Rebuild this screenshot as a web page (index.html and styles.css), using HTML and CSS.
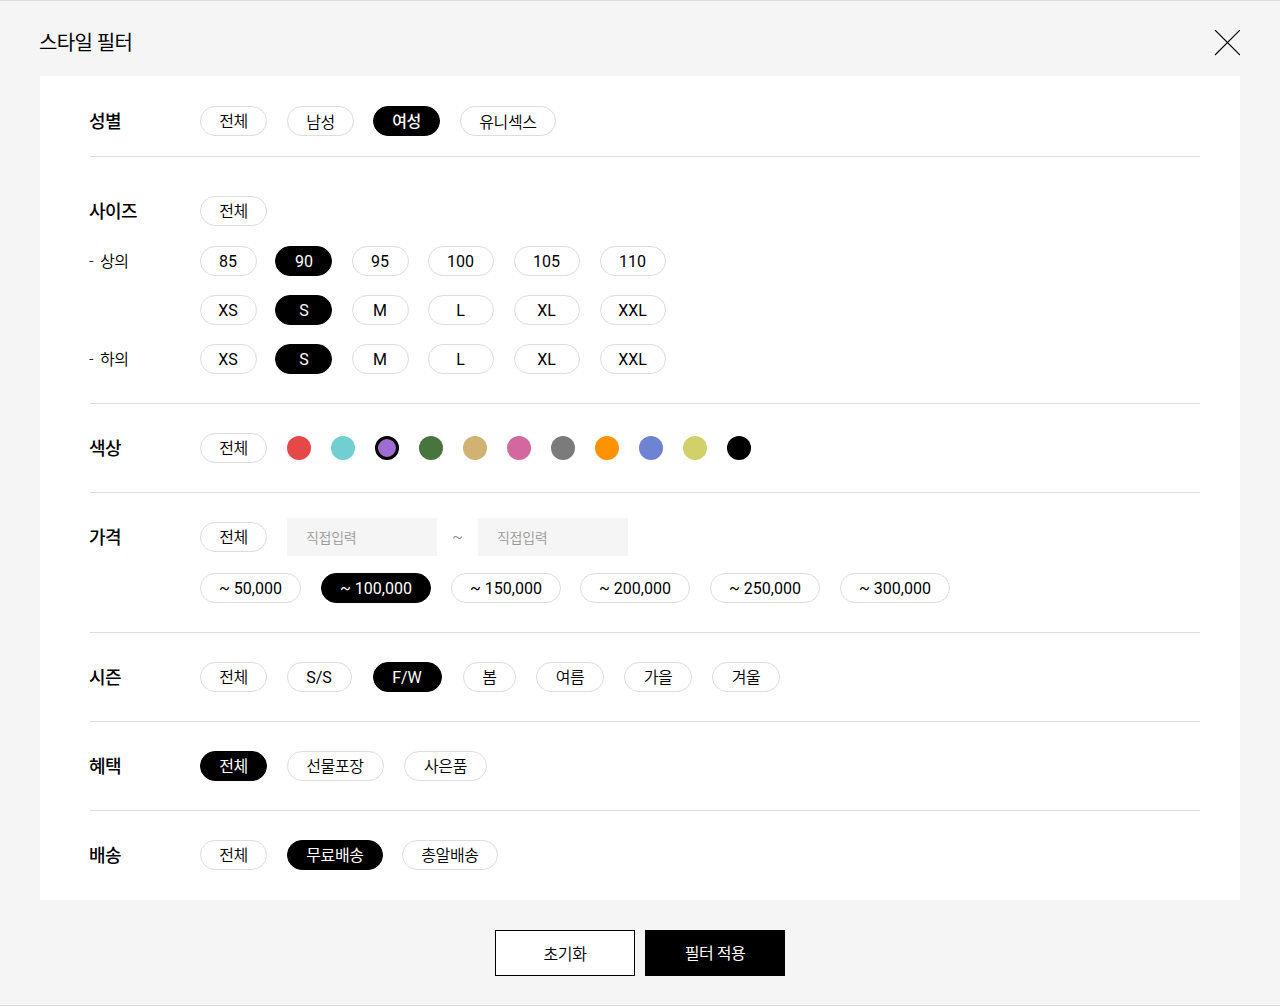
FILE: index.html
```html
<!DOCTYPE html>
<html lang="ko">
<head>
<meta charset="utf-8">
<title>스타일 필터</title>
<link rel="stylesheet" href="styles.css">
</head>
<body>
<section class="filter">
  <header class="filter-head">
    <h1>스타일 필터</h1>
    <button class="close" aria-label="닫기"><svg width="26" height="26" viewBox="0 0 26 26"><path d="M1 0l25 25M26 0l-25 25" fill="none" stroke="#000" stroke-width="1.1"/></svg></button>
  </header>
  <div class="panel">
    <div class="group gender">
      <h2>성별</h2>
      <div class="row"><button class="pill w67">전체</button><button class="pill w67 low">남성</button><button class="pill w67 on strong pull">여성</button><button class="pill w96 low">유니섹스</button></div>
    </div>
    <div class="group size">
      <h2>사이즈</h2>
      <div class="row"><button class="pill w67">전체</button></div>
      <h3>- 상의</h3>
      <div class="row latin"><button class="pill w57">85</button><button class="pill w57 on pull2">90</button><button class="pill w57">95</button><button class="pill w66 pull">100</button><button class="pill w66">105</button><button class="pill w66">110</button></div>
      <span></span>
      <div class="row latin"><button class="pill w57">XS</button><button class="pill w57 on pull2">S</button><button class="pill w57">M</button><button class="pill w66 pull">L</button><button class="pill w66">XL</button><button class="pill w66">XXL</button></div>
      <h3>- 하의</h3>
      <div class="row latin"><button class="pill w57">XS</button><button class="pill w57 on pull2">S</button><button class="pill w57">M</button><button class="pill w66 pull">L</button><button class="pill w66">XL</button><button class="pill w66">XXL</button></div>
    </div>
    <div class="group">
      <h2>색상</h2>
      <div class="row"><button class="pill w67">전체</button><button class="dot red"></button><button class="dot aqua"></button><button class="dot purple picked"></button><button class="dot green"></button><button class="dot beige"></button><button class="dot pink"></button><button class="dot gray"></button><button class="dot orange"></button><button class="dot blue"></button><button class="dot lime"></button><button class="dot black"></button></div>
    </div>
    <div class="group price">
      <h2>가격</h2>
      <div class="row range"><button class="pill w67">전체</button><input type="text" placeholder="직접입력"><span class="tilde">~</span><input type="text" placeholder="직접입력"></div>
      <span></span>
      <div class="row latin amounts"><button class="pill w101">~ 50,000</button><button class="pill w110 on">~ 100,000</button><button class="pill w110">~ 150,000</button><button class="pill w110 pull">~ 200,000</button><button class="pill w110">~ 250,000</button><button class="pill w110">~ 300,000</button></div>
    </div>
    <div class="group">
      <h2>시즌</h2>
      <div class="row"><button class="pill w67">전체</button><button class="pill w65 en">S/S</button><button class="pill w69 on push en">F/W</button><button class="pill w53 push">봄</button><button class="pill w68">여름</button><button class="pill w68">가을</button><button class="pill w68">겨울</button></div>
    </div>
    <div class="group">
      <h2>혜택</h2>
      <div class="row"><button class="pill w67 on">전체</button><button class="pill w97">선물포장</button><button class="pill w83">사은품</button></div>
    </div>
    <div class="group">
      <h2>배송</h2>
      <div class="row"><button class="pill w67">전체</button><button class="pill w96 on">무료배송</button><button class="pill w96 pull">총알배송</button></div>
    </div>
  </div>
  <footer class="actions">
    <button class="action">초기화</button>
    <button class="action apply">필터 적용</button>
  </footer>
</section>
</body>
</html>
```
FILE: styles.css
```css
* { box-sizing: border-box; }
body { margin: 0; font-family: Roboto, "Noto Sans CJK KR", sans-serif; color: #000; }
h1, h2, h3 { margin: 0; }
button, input { font: inherit; padding: 0; margin: 0; border: 0; border-radius: 0; }

.filter { height: 1006px; padding: 0 40px; background: #f5f5f5; border-top: 1px solid #ddd; border-bottom: 1px solid #ddd; }
.filter-head { height: 75px; display: flex; justify-content: space-between; padding-top: 29px; }
.filter-head h1 { margin-left: -1px; font-size: 20px; font-weight: 400; line-height: 26px; letter-spacing: -0.6px; }
.close { width: 26px; height: 26px; background: none; color: inherit; }
.close svg { display: block; }

.panel { height: 824px; padding: 0 40px 0 50px; background: #fff; }
.group { display: grid; grid-template-columns: 110px 1fr; align-items: center; align-content: start; height: 89px; padding-top: 29px; border-bottom: 1px solid #ddd; }
.group:last-child { border-bottom: 0; }
.gender { height: 81px; padding-top: 30px; }
.size { height: 247px; padding-top: 39px; grid-template-rows: 31px 30px 30px 30px; row-gap: 19px; }
.size > :nth-child(-n+2) { align-self: start; }
.price { height: 140px; padding-top: 25px; grid-template-rows: 38px 30px; row-gap: 17px; }

.group h2 { margin-left: -1px; padding-top: 1px; font-size: 18px; font-weight: 500; line-height: 29px; letter-spacing: -0.5px; }
.group h3 { margin-left: -1px; padding-top: 2px; font-size: 16px; font-weight: 350; line-height: 28px; letter-spacing: -0.3px; word-spacing: 3px; }
.row { display: flex; align-items: center; gap: 20px; }

.pill { height: 30px; flex: none; padding-top: 1px; border: 1px solid #ddd; border-radius: 15px; background: #fff; color: #000; font-size: 16px; font-weight: 350; line-height: 27px; letter-spacing: -0.35px; white-space: nowrap; text-align: center; }
.on { background: #000; border-color: #000; color: #fff; font-weight: 400; }
.strong { font-weight: 500; }
.low { padding-top: 2px; }
.latin .pill, .en { padding: 1px 1px 0 0; font-weight: 400; letter-spacing: 0; }
.latin .on { padding: 1px 0 0 1px; }
.amounts .pill, .amounts .on { padding: 1px 0 0; }
.pull { margin-left: -1px; }
.pull2 { margin-left: -2px; }
.push { margin-left: 1px; }
.w53 { width: 53px; }
.w57 { width: 57px; }
.w65 { width: 65px; }
.w66 { width: 66px; }
.w67 { width: 67px; }
.w68 { width: 68px; }
.w69 { width: 69px; }
.w83 { width: 83px; }
.w96 { width: 96px; }
.w97 { width: 97px; padding-right: 1px; }
.w101 { width: 101px; }
.w110 { width: 110px; }

.dot { width: 24px; height: 24px; border-radius: 50%; }
.red { background: #e64848; }
.aqua { background: #71cfd2; }
.purple { background: #a06cd2; }
.green { background: #48743e; }
.beige { background: #d2b271; }
.pink { background: #d2689e; }
.gray { background: #7b7b7b; }
.orange { background: #ff9200; }
.blue { background: #6e83d2; }
.lime { background: #d0d168; }
.black { background: #000; }
.picked { border: 3px solid #000; }

.range input { width: 150px; height: 38px; padding: 1px 19px 0; background: #f5f5f5; font-size: 14px; font-weight: 350; letter-spacing: -0.3px; }
.range input::placeholder { color: #999; opacity: 1; }
.range .tilde { width: 41px; margin: -2px -20px 0; text-align: center; color: #888; font-size: 16px; font-weight: 300; }

.actions { display: flex; justify-content: center; gap: 10px; padding-top: 30px; }
.action { width: 140px; height: 46px; border: 1px solid #000; background: #fff; color: #000; font-size: 16px; font-weight: 350; letter-spacing: -0.45px; }
.apply { padding: 0 0 2px; background: #000; color: #fff; font-weight: 400; }
```
